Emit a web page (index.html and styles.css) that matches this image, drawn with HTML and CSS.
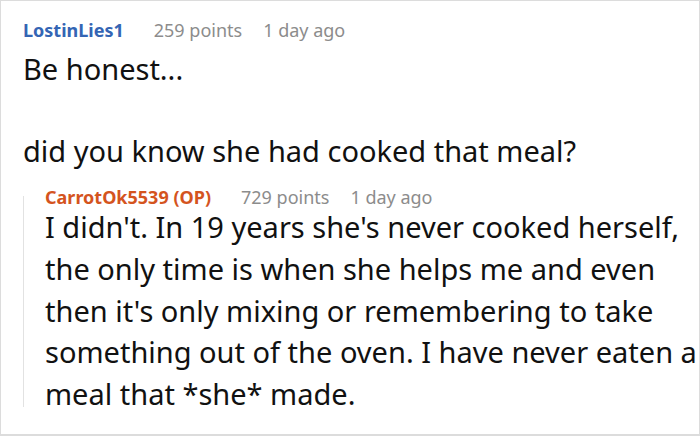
FILE: index.html
```html
<!DOCTYPE html>
<html>
<head>
<meta charset="utf-8">
<link rel="stylesheet" href="styles.css">
</head>
<body>
<div class="frame">
  <div class="comment">
    <div class="meta">
      <span class="author">LostinLies1</span>
      <span class="info">259 points</span>
      <span class="info">1 day ago</span>
    </div>
    <div class="body">
      <p>Be honest...</p>
      <p class="gap">did you know she had cooked that meal?</p>
    </div>
    <div class="reply">
      <div class="meta">
        <span class="author op">CarrotOk5539 (OP)</span>
        <span class="info">729 points</span>
        <span class="info">1 day ago</span>
      </div>
      <div class="body">
        <p>I didn't. In 19 years she's never cooked herself, the only time is when she helps me and even then it's only mixing or remembering to take something out of the oven. I have never eaten a meal that *she* made.</p>
      </div>
    </div>
  </div>
</div>
</body>
</html>
```
FILE: styles.css
```css
html, body {
  margin: 0;
  padding: 0;
  background: #ffffff;
}
.frame {
  width: 700px;
  height: 436px;
  box-sizing: border-box;
  border: 1px solid #dcdcdc;
  border-bottom-width: 2px;
  overflow: hidden;
  font-family: "Noto Sans", sans-serif;
}
.comment {
  padding: 17px 0 0 22px;
}
.meta {
  display: flex;
  gap: 21px;
  font-size: 18px;
  line-height: 24px;
}
.author {
  font-weight: bold;
  color: #3465b4;
  margin-right: 9px;
}
.author.op {
  color: #d4541e;
}
.info {
  color: #8c8c8c;
}
.body {
  font-size: 29px;
  line-height: 41.5px;
  color: #111111;
}
.body p {
  margin: 0;
}
.comment > .body {
  margin-top: 6px;
}
.body p.gap {
  margin-top: 40px;
}
.reply {
  position: relative;
  margin-top: 14px;
  padding-left: 22px;
}
.reply .body {
  margin-top: -3px;
  line-height: 41.75px;
}
.reply::before {
  content: "";
  position: absolute;
  left: 0;
  top: 11px;
  bottom: 8px;
  width: 1px;
  background: #e2e2e2;
}
```
